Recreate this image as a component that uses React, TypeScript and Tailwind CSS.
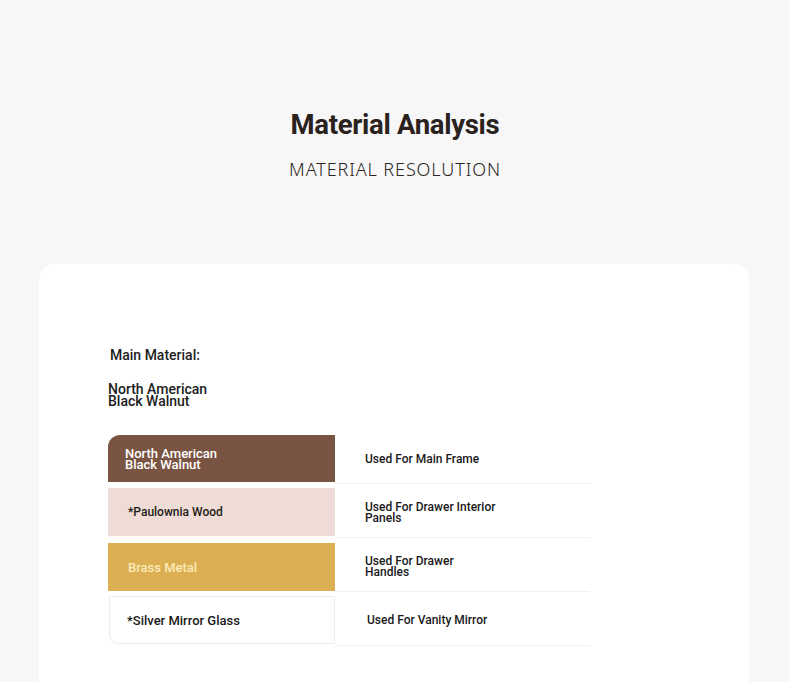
const ROWS = [
  {
    name: ["North American", "Black Walnut"],
    use: ["Used For Main Frame"],
    cell: "bg-[#7a5442] text-white rounded-tl-[12px] text-[13px]",
    pad: "pl-[17px]",
  },
  {
    name: ["*Paulownia Wood"],
    use: ["Used For Drawer Interior", "Panels"],
    cell: "bg-[#efdcd6] text-[#1f1a17] text-[12px]",
    pad: "pl-5",
  },
  {
    name: ["Brass Metal"],
    use: ["Used For Drawer", "Handles"],
    cell: "bg-[#dcaf52] text-[#fbeab8] text-[13px]",
    pad: "pl-5",
  },
  {
    name: ["*Silver Mirror Glass"],
    use: ["Used For Vanity Mirror"],
    cell: "bg-white text-[#1a1a1a] border border-[#ededed] rounded-bl-[10px] ml-px text-[13px]",
    pad: "pl-[17px]",
  },
];

export default function App() {
  return (
    <div className="min-h-[682px] bg-[#f7f7f7] font-['Roboto',sans-serif] overflow-hidden">
      <div className="flex flex-col items-center pt-[107px]">
        <h1 className="text-[27.5px] leading-[36px] font-bold text-[#2a221d] tracking-[-0.3px]">
          Material Analysis
        </h1>
        <p className="mt-[15px] text-[18px] leading-[22px] font-light tracking-[0.9px] text-[#2a2523] font-['Noto_Sans',sans-serif]">
          MATERIAL RESOLUTION
        </p>
      </div>

      <div className="ml-[39px] mr-[41px] mt-[84px] bg-white rounded-[16px] h-[440px] pt-[82px] pl-[69px]">
        <p className="ml-[2px] text-[14px] leading-[18px] font-medium text-[#1d1d1d]">Main Material:</p>
        <p className="mt-[19px] text-[14px] leading-[12px] font-medium text-[#1d1d1d]">
          North American
          <br />
          Black Walnut
        </p>

        <div className="mt-[28px] w-[482px]">
          {ROWS.map((r, i) => {
            const top = i === 0 ? "" : i === 2 ? "pt-[5px]" : "pt-[4px]";
            return (
              <div key={i} className={`flex ${i === 0 ? "h-[49px]" : "h-[54px]"}`}>
                <div className={`w-[227px] flex flex-col ${top}`}>
                  <div className={`flex items-center ${r.cell} ${r.pad} ${i === 0 ? "h-[47px]" : "h-[48px]"}`}>
                    <span className="leading-[11px] font-medium">
                      {r.name.map((n, j) => (
                        <span key={j} className="block">{n}</span>
                      ))}
                    </span>
                  </div>
                </div>
                <div className={`flex-1 border-b border-[#f0f0f0] flex items-center pl-[30px] ${top}`}>
                  <span className={`text-[12px] leading-[11px] font-medium text-[#1a1a1a] ${i === 3 ? "pl-[2px]" : ""}`}>
                    {r.use.map((n, j) => (
                      <span key={j} className="block">{n}</span>
                    ))}
                  </span>
                </div>
              </div>
            );
          })}
        </div>
      </div>
    </div>
  );
}
